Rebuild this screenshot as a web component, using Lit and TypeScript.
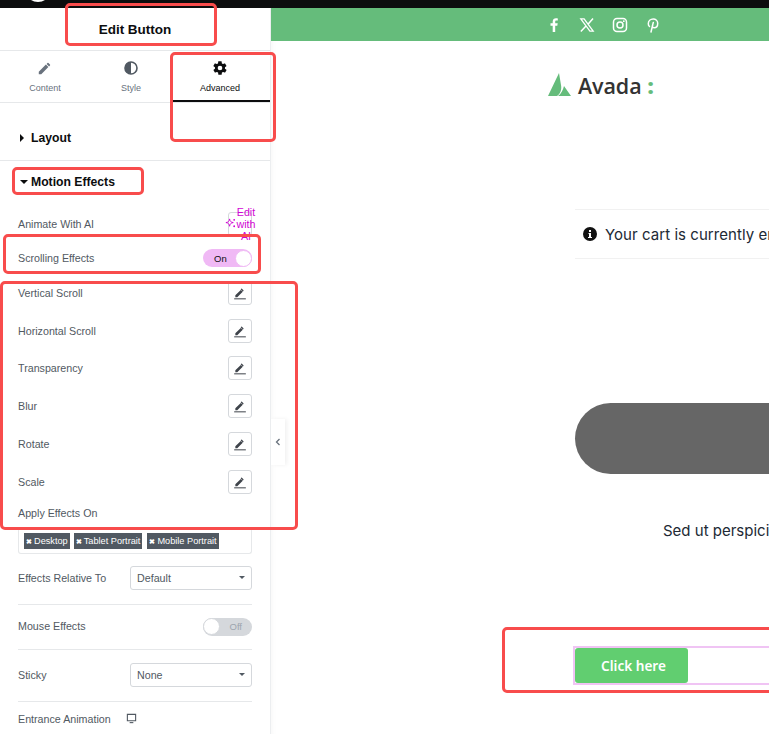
import { LitElement, html, css, svg } from 'lit';
import { customElement } from 'lit/decorators.js';

const pencil = svg`<path d="M2 13.2V16h2.800l8-8L10 5.200zM14.600 6.200a.8.8 0 0 0 0-1.100l-1.700-1.700a.8.8 0 0 0-1.100 0l-1 1 2.800 2.800z" fill="currentColor"/>`;
const editPencil = svg`<path d="M3 12v2.500h2.500l7-7L10 5zM13.400 6.500a.7.7 0 0 0 0-1l-1.900-1.900a.7.7 0 0 0-1 0l-.7.7 2.900 2.900z" fill="currentColor"/><path d="M1.500 16.500h15" stroke="currentColor" stroke-width="1.300"/>`;

@customElement('app-root')
export class AppRoot extends LitElement {
  static styles = css`
    :host {
      display: block;
      position: relative;
      width: 769px;
      height: 734px;
      overflow: hidden;
      background: #fff;
      font-family: 'Liberation Sans', Arial, sans-serif;
    }
    .topbar {
      height: 8px;
      background: #0c0d0e;
      position: relative;
    }
    .blip {
      position: absolute;
      left: 28px;
      top: -12px;
      width: 20px;
      height: 14px;
      border-radius: 50%;
      background: #fff;
    }
    .main {
      display: flex;
      height: 726px;
    }
    .side {
      width: 271px;
      flex: none;
      box-sizing: border-box;
      border-right: 1px solid #eceef0;
    }
    .head {
      height: 43px;
      box-sizing: border-box;
      padding-top: 13px;
      text-align: center;
      font-size: 13.500px;
      line-height: 18px;
      font-weight: bold;
      color: #0c0d0e;
      border-bottom: 1px solid #e6e8ea;
    }
    .tabs {
      display: flex;
      height: 52px;
      box-sizing: border-box;
      border-bottom: 1px solid #e6e8ea;
    }
    .tab {
      width: 90px;
      box-sizing: border-box;
      padding-top: 9px;
      text-align: center;
      font-size: 9px;
      line-height: 12px;
      color: #69727d;
    }
    .tab.mid {
      width: 82px;
    }
    .tab.on {
      width: 98px;
      padding-right: 2px;
      color: #0c0d0e;
      border-bottom: 2px solid #0c0d0e;
      height: 51px;
    }
    .tab svg {
      display: block;
      margin: 0 auto 6px;
      width: 16px;
      height: 16px;
    }
    .tab .grey {
      color: #69727d;
    }
    .section {
      display: flex;
      align-items: center;
      gap: 7px;
      padding-left: 20px;
      font-size: 12.200px;
      font-weight: bold;
      color: #0c0d0e;
    }
    .section.layout {
      height: 58px;
      box-sizing: border-box;
      padding-top: 13px;
      border-bottom: 1px solid #e6e8ea;
    }
    .section.motion {
      height: 41px;
    }
    .arrow-r {
      width: 0;
      height: 0;
      border-left: 4px solid #0c0d0e;
      border-top: 4px solid transparent;
      border-bottom: 4px solid transparent;
    }
    .arrow-d {
      width: 0;
      height: 0;
      margin-right: -4px;
      border-top: 4px solid #0c0d0e;
      border-left: 4px solid transparent;
      border-right: 4px solid transparent;
    }
    .body {
      padding: 0 18px;
    }
    .row {
      display: flex;
      align-items: center;
      justify-content: space-between;
      font-size: 10.700px;
      color: #515962;
    }
    .ai {
      height: 45px;
      padding-bottom: 1px;
      box-sizing: border-box;
    }
    .ai-btn {
      width: 24px;
      height: 24px;
      box-sizing: border-box;
      border: 1px solid #d5d8dc;
      border-radius: 3px;
      position: relative;
    }
    .ai-label {
      position: absolute;
      left: 6px;
      top: -7px;
      width: 22px;
      font-size: 10.700px;
      line-height: 12px;
      text-align: center;
      color: #d004d4;
    }
    .ai-btn svg {
      position: absolute;
      left: -4px;
      top: 5px;
      width: 11px;
      height: 11px;
    }
    .scroll {
      height: 22px;
    }
    .switch {
      width: 49px;
      height: 18px;
      box-sizing: border-box;
      border-radius: 9px;
      display: flex;
      align-items: center;
      font-size: 9.500px;
    }
    .switch.on {
      background: #f0b9f5;
      color: #0c0d0e;
      padding-left: 11px;
      justify-content: space-between;
    }
    .switch.off {
      background: #d5d8dc;
      color: #9da5ae;
      justify-content: space-between;
      padding-right: 10px;
    }
    .knob {
      width: 17px;
      height: 17px;
      border-radius: 50%;
      background: #fff;
    }
    .on .knob {
      border: 1px solid #f0b9f5;
      box-sizing: border-box;
    }
    .off .knob {
      border: 1px solid #d5d8dc;
      box-sizing: border-box;
    }
    .effects {
      margin-top: 5px;
    }
    .effect {
      height: 37.800px;
    }
    .edit {
      width: 24px;
      height: 24px;
      box-sizing: border-box;
      border: 1px solid #d5d8dc;
      border-radius: 3px;
      color: #3f444b;
      display: flex;
      align-items: center;
      justify-content: center;
    }
    .edit svg {
      width: 14px;
      height: 14px;
    }
    .apply {
      height: 20px;
      margin-top: 2px;
    }
    .tags {
      display: flex;
      gap: 4px;
      height: 26px;
      margin-top: 5px;
      box-sizing: border-box;
      padding: 5px 5px;
      border: 1px solid #e6e8ea;
      border-top: none;
      border-radius: 3px;
    }
    .tag {
      height: 16px;
      padding: 0 2px;
      background: #515962;
      color: #fff;
      font-size: 9.200px;
      line-height: 16px;
      white-space: nowrap;
    }
    .tag b {
      font-size: 7px;
      margin-right: 2px;
    }
    .tag.last {
      margin-left: 1px;
    }
    .sel-row {
      padding-top: 12px;
      padding-bottom: 14px;
    }
    .divided {
      border-bottom: 1px solid #e6e8ea;
    }
    .select {
      width: 122px;
      height: 24px;
      box-sizing: border-box;
      border: 1px solid #d5d8dc;
      border-radius: 3px;
      padding: 0 6px;
      display: flex;
      align-items: center;
      justify-content: space-between;
      color: #515962;
    }
    .select i {
      width: 0;
      height: 0;
      border-top: 3px solid #515962;
      border-left: 3px solid transparent;
      border-right: 3px solid transparent;
    }
    .mouse {
      height: 44px;
    }
    .mouse span {
      margin-top: -2px;
    }
    .sticky {
      height: 50px;
      padding-bottom: 1px;
    }
    .entrance {
      height: 34px;
      justify-content: flex-start;
      gap: 15px;
    }
    .entrance svg {
      width: 11px;
      height: 11px;
    }
    .collapse {
      position: absolute;
      left: 271px;
      top: 419px;
      width: 14px;
      height: 46px;
      background: #fff;
      box-shadow: 2px 0 4px rgba(0, 0, 0, 0.06);
      display: flex;
      align-items: center;
      justify-content: center;
    }
    .collapse svg {
      width: 10px;
      height: 10px;
    }
    .page {
      flex: 1;
      min-width: 0;
      overflow: hidden;
      box-shadow: inset 6px 0 6px -6px rgba(0, 0, 0, 0.05);
    }
    .social {
      height: 33px;
      background: #65bc7b;
      display: flex;
      align-items: center;
      gap: 17px;
      padding-left: 275px;
      color: #fff;
    }
    .social svg {
      width: 16px;
      height: 16px;
      display: block;
    }
    .logo {
      display: flex;
      align-items: center;
      gap: 6px;
      margin: 31px 0 0 276px;
      height: 26px;
      font-family: 'Open Sans', sans-serif;
      font-size: 21.500px;
      font-weight: 600;
      color: #333;
      letter-spacing: -0.1px;
    }
    .logo svg {
      width: 24px;
      height: 24px;
      margin-right: 1px;
    }
    .logo span {
      color: #65bc7b;
      font-weight: 800;
    }
    .notice {
      margin: 111px 0 0 304px;
      width: 300px;
      height: 50px;
      box-sizing: border-box;
      border-top: 1px solid #f1f1f1;
      border-bottom: 1px solid #f1f1f1;
      display: flex;
      align-items: center;
      gap: 8px;
      padding-left: 8px;
      font-family: Inter, sans-serif;
      font-size: 15px;
      letter-spacing: 0.05px;
      color: #212934;
      white-space: nowrap;
    }
    .notice svg {
      width: 14px;
      height: 14px;
      flex: none;
    }
    .pill {
      margin: 144px 0 0 304px;
      width: 400px;
      height: 71px;
      border-radius: 36px 0 0 36px;
      background: #666;
    }
    .sed {
      margin: 47px 0 0 392px;
      font-family: Inter, sans-serif;
      font-size: 15px;
      line-height: 20px;
      color: #212934;
      white-space: nowrap;
    }
    .btn-wrap {
      margin: 105px 0 0 302px;
      height: 39px;
      width: 300px;
      box-sizing: border-box;
      border: 2px solid #f0c4f4;
      display: flex;
      align-items: center;
    }
    .btn {
      width: 113px;
      height: 35px;
      box-sizing: border-box;
      padding-left: 4px;
      border-radius: 3px;
      background: #61ce70;
      color: #fff;
      font-family: 'Noto Sans', sans-serif;
      font-weight: 600;
      font-size: 13.600px;
      display: flex;
      align-items: center;
      justify-content: center;
    }
    .mark {
      position: absolute;
      box-sizing: border-box;
      border: 3px solid #f84c4c;
      border-radius: 5px;
      pointer-events: none;
    }
  `;

  render() {
    const effects = ['Vertical Scroll', 'Horizontal Scroll', 'Transparency', 'Blur', 'Rotate', 'Scale'];
    const marks = [
      [65, 3, 152, 43],
      [170, 52, 106, 90],
      [12, 167, 132, 28],
      [3, 234, 258, 40],
      [0, 281, 298, 249],
      [502, 627, 290, 66],
    ];
    return html`
      <div class="topbar"><div class="blip"></div></div>
      <div class="main">
        <div class="side">
          <div class="head">Edit Button</div>
          <div class="tabs">
            <div class="tab">
              <svg class="grey" viewBox="0 0 18 18">${pencil}</svg>
              Content
            </div>
            <div class="tab mid">
              <svg viewBox="0 0 16 16"><circle cx="8" cy="8" r="6" fill="none" stroke="#515962" stroke-width="1.600"/><path d="M8 2a6 6 0 0 0 0 12z" fill="#515962"/></svg>
              Style
            </div>
            <div class="tab on">
              <svg viewBox="0 0 24 24"><path fill="#0c0d0e" fill-rule="evenodd" d="M19.400 13c0-.3.1-.7.1-1s0-.7-.1-1l2.100-1.600c.2-.2.2-.4.1-.6l-2-3.500c-.1-.2-.4-.3-.6-.2l-2.500 1c-.5-.4-1.100-.7-1.700-1l-.4-2.700c0-.2-.2-.4-.5-.4h-4c-.3 0-.5.2-.5.4l-.4 2.700c-.6.3-1.200.6-1.700 1l-2.500-1c-.2-.1-.5 0-.6.2l-2 3.500c-.1.2-.1.4.1.6L4.500 11c0 .3-.1.7-.1 1s0 .7.1 1l-2.100 1.600c-.2.2-.2.4-.1.6l2 3.500c.1.2.4.3.6.2l2.500-1c.5.4 1.100.7 1.700 1l.4 2.700c0 .2.2.4.5.4h4c.3 0 .5-.2.5-.4l.4-2.700c.6-.3 1.200-.6 1.700-1l2.500 1c.2.1.5 0 .6-.2l2-3.500c.1-.2.1-.4-.1-.6zM12 15.500a3.500 3.500 0 1 1 0-7 3.500 3.500 0 0 1 0 7z"/></svg>
              Advanced
            </div>
          </div>
          <div class="section layout"><i class="arrow-r"></i>Layout</div>
          <div class="section motion"><i class="arrow-d"></i>Motion Effects</div>
          <div class="body">
            <div class="row ai">
              Animate With AI
              <div class="ai-btn">
                <svg viewBox="0 0 12 12"><path d="M5 1c.3 2.500 1.500 3.700 4 4-2.500.3-3.700 1.500-4 4-.3-2.500-1.500-3.700-4-4 2.500-.3 3.700-1.500 4-4z" fill="none" stroke="#d004d4"/><circle cx="10" cy="2" r="1" fill="#d004d4"/><circle cx="10" cy="9" r="1" fill="#d004d4"/></svg>
                <div class="ai-label">Edit with AI</div>
              </div>
            </div>
            <div class="row scroll">
              Scrolling Effects
              <div class="switch on">On<i class="knob"></i></div>
            </div>
            <div class="effects">
              ${effects.map(
                (name) => html`
                  <div class="row effect">
                    ${name}
                    <div class="edit"><svg viewBox="0 0 18 18">${editPencil}</svg></div>
                  </div>
                `,
              )}
            </div>
            <div class="row apply">Apply Effects On</div>
            <div class="tags">
              <div class="tag"><b>✖</b>Desktop</div>
              <div class="tag"><b>✖</b>Tablet Portrait</div>
              <div class="tag last"><b>✖</b>Mobile Portrait</div>
            </div>
            <div class="row sel-row divided">
              Effects Relative To
              <div class="select">Default<i></i></div>
            </div>
            <div class="row mouse divided">
              <span>Mouse Effects</span>
              <div class="switch off"><i class="knob"></i>Off</div>
            </div>
            <div class="row sticky divided">
              Sticky
              <div class="select">None<i></i></div>
            </div>
            <div class="row entrance">
              Entrance Animation
              <svg viewBox="0 0 12 12"><path d="M1.500 1.500h9v7h-9z" fill="none" stroke="#515962" stroke-width="1.200"/><path d="M4 10.500h4" stroke="#515962" stroke-width="1.200"/></svg>
            </div>
          </div>
        </div>
        <div class="page">
          <div class="social">
            <svg viewBox="0 0 16 16"><path fill="currentColor" d="M9.200 15V8.800h2.100l.4-2.500H9.200V4.800c0-.7.3-1.200 1.300-1.200h1.300V1.400C11.500 1.300 10.800 1.200 10 1.200 8 1.200 6.700 2.400 6.700 4.500v1.800H4.500v2.500h2.200V15z"/></svg>
            <svg viewBox="0 0 16 16"><path fill="none" stroke="currentColor" stroke-width="1.300" d="M1.800 1.800h3.300l9.100 12.400h-3.300z"/><path stroke="currentColor" stroke-width="1.500" d="M14 1.500 9 7.200M7 9l-5.200 5.500"/></svg>
            <svg viewBox="0 0 16 16"><rect x="1.500" y="1.500" width="13" height="13" rx="3.500" fill="none" stroke="currentColor" stroke-width="1.500"/><circle cx="8" cy="8" r="3" fill="none" stroke="currentColor" stroke-width="1.500"/><circle cx="11.800" cy="4.200" r=".9" fill="currentColor"/></svg>
            <svg viewBox="0 0 16 16"><path fill="none" stroke="currentColor" stroke-width="1.500" stroke-linecap="round" d="M4.500 9.500C3.500 8.700 3.300 7.600 3.300 6.700 3.300 4 5.500 2 8.200 2c2.600 0 4.500 1.800 4.500 4.300 0 2.600-1.500 4.500-3.500 4.500-1.200 0-2-.8-1.800-2L8.300 5.500M7.700 8 6 15"/></svg>
          </div>
          <div class="logo">
            <svg viewBox="0 0 24 24"><path fill="#65bc7b" d="M12 0 1 23h9c3-2 5-6 4-11z"/><path fill="#65bc7b" d="M17 13l7 10H11c3-2 5-6 6-10z"/></svg>
            Avada <span>:</span>
          </div>
          <div class="notice">
            <svg viewBox="0 0 14 14"><circle cx="7" cy="7" r="7" fill="#111"/><path d="M6 3h2v2H6zM5.500 6H8v4h1v1H5v-1h1V7h-.5z" fill="#fff"/></svg>
            Your cart is currently empty.
          </div>
          <div class="pill"></div>
          <div class="sed">Sed ut perspiciatis unde omnis</div>
          <div class="btn-wrap"><div class="btn">Click here</div></div>
        </div>
      </div>
      <div class="collapse"><svg viewBox="0 0 10 10"><path d="M6.500 2 3.500 5l3 3" fill="none" stroke="#69727d" stroke-width="1.300"/></svg></div>
      ${marks.map(
        ([x, y, w, h]) => html`<div class="mark" style="left:${x}px;top:${y}px;width:${w}px;height:${h}px"></div>`,
      )}
    `;
  }
}
